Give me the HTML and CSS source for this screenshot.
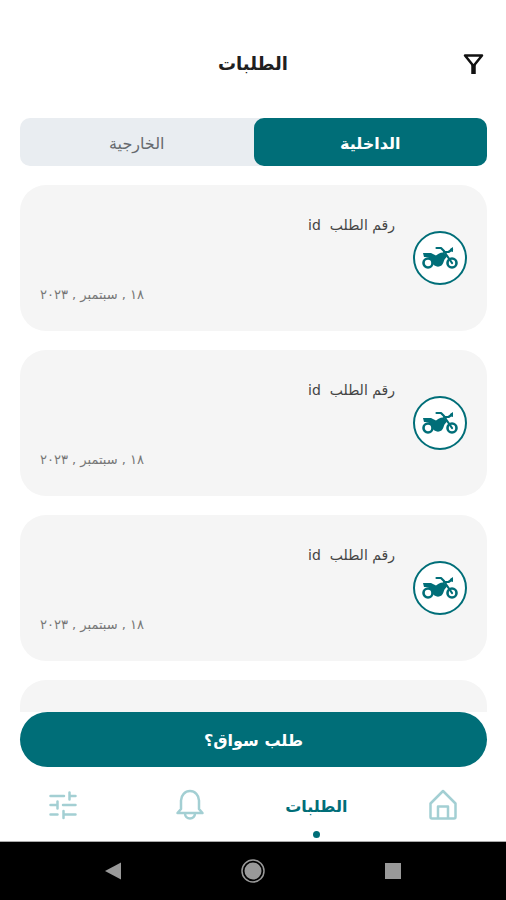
FILE: index.html
```
<!DOCTYPE html>
<html lang="ar" dir="rtl">
<head>
<meta charset="utf-8">
<meta name="viewport" content="width=device-width, initial-scale=1">
<title>الطلبات</title>
<link rel="stylesheet" href="styles.css">
</head>
<body>
<svg class="sprite" aria-hidden="true">
  <symbol id="motorcycle" viewBox="0 0 36 24">
    <g fill="none" stroke="currentColor">
      <circle cx="6" cy="17" r="4.500" stroke-width="2.600"/>
      <circle cx="30" cy="17" r="4.500" stroke-width="2.600"/>
      <path d="M14.500 2h4.500l3 3 2.500 4 5.500 8M22 6h4.500l3.500-2.500" stroke-width="2.200" stroke-linecap="round" stroke-linejoin="round"/>
    </g>
    <path fill="currentColor" d="M1 7h8l5 2.500c2-2 5-3.500 8-3l3 4-2.500 3c-1 2-1 4-3 6-2 1.500-5 1.500-7 0-1.500-1-2-2-2.500-4C9 12 6 10.500 2 11zM28 3l3-2v5l-3-1z"/>
  </symbol>
</svg>
<div class="app">
  <header class="header">
    <h1 class="title">الطلبات</h1>
    <button class="filter" type="button" aria-label="تصفية">
      <svg class="filter-icon" viewBox="0 0 22 22"><path d="M3 2.500h17L11.500 13z" fill="none" stroke="currentColor" stroke-width="2.500" stroke-linejoin="round"/><path d="M11.500 11v10" stroke="currentColor" stroke-width="4.500"/></svg>
    </button>
  </header>
  <div class="tabs" role="tablist">
    <button class="tab tab-active" type="button" role="tab" aria-selected="true">الداخلية</button>
    <button class="tab" type="button" role="tab" aria-selected="false">الخارجية</button>
  </div>
  <main class="orders">
    <article class="card">
      <span class="badge"><svg class="bike"><use href="#motorcycle"/></svg></span>
      <div class="details"><h2 class="order">رقم الطلب&nbsp; id</h2><time class="date">١٨ , سبتمبر , ٢٠٢٣</time></div>
    </article>
    <article class="card">
      <span class="badge"><svg class="bike"><use href="#motorcycle"/></svg></span>
      <div class="details"><h2 class="order">رقم الطلب&nbsp; id</h2><time class="date">١٨ , سبتمبر , ٢٠٢٣</time></div>
    </article>
    <article class="card">
      <span class="badge"><svg class="bike"><use href="#motorcycle"/></svg></span>
      <div class="details"><h2 class="order">رقم الطلب&nbsp; id</h2><time class="date">١٨ , سبتمبر , ٢٠٢٣</time></div>
    </article>
    <article class="card"></article>
  </main>
  <button class="request" type="button">طلب سواق؟</button>
  <nav class="nav">
    <a class="nav-item" href="#home" aria-label="الرئيسية">
      <svg class="nav-icon" viewBox="0 0 32 32"><path d="M3.500 14.500 16 2l12.500 12.500V28q0 1.500-1.500 1.500H5q-1.500 0-1.500-1.500zM11 29V17.500h10V29" fill="none" stroke="currentColor" stroke-width="2.500" stroke-linejoin="round"/></svg>
    </a>
    <a class="nav-item nav-current" href="#orders" aria-current="page">الطلبات</a>
    <a class="nav-item" href="#notifications" aria-label="الإشعارات">
      <svg class="nav-icon" viewBox="0 0 32 32"><path d="M7 20V11.500a9 9.500 0 0 1 18 0V20l3.500 4H3.500zM11 24.500a5 5 0 0 0 10 0" fill="none" stroke="currentColor" stroke-width="2.500" stroke-linejoin="round" stroke-linecap="round"/></svg>
    </a>
    <a class="nav-item" href="#settings" aria-label="الإعدادات">
      <svg class="nav-icon" viewBox="0 0 32 32"><path d="M3.500 7H17M22.500 3.500v7M22.500 7h6M3.500 16h7M10.500 12.500v7M16 16h12.500M3.500 25.500h7M16.500 22v7M16.500 25.500h12" fill="none" stroke="currentColor" stroke-width="2.500" stroke-linecap="round"/></svg>
    </a>
  </nav>
  <footer class="system">
    <button class="key" type="button" aria-label="رجوع"><svg class="key-icon" viewBox="0 0 24 24"><path d="M4 12 20 3.500v17z" fill="currentColor"/></svg></button>
    <button class="key" type="button" aria-label="الشاشة الرئيسية"><svg class="key-icon" viewBox="0 0 24 24"><circle cx="12" cy="12" r="8.500" fill="currentColor"/><circle cx="12" cy="12" r="11" fill="none" stroke="currentColor" stroke-width="1.500"/></svg></button>
    <button class="key" type="button" aria-label="التطبيقات"><svg class="key-icon" viewBox="0 0 24 24"><path d="M4 4h16v16H4z" fill="currentColor"/></svg></button>
  </footer>
</div>
</body>
</html>
```
FILE: styles.css
```
:root {
  --teal: #006e78;
  --teal-light: #a3cfd3;
}
* { box-sizing: border-box; }
body {
  margin: 0;
  background: #fff;
  font-family: "DejaVu Sans", sans-serif;
}
button {
  border: 0;
  padding: 0;
  background: none;
  font: inherit;
  color: inherit;
  cursor: pointer;
}
svg { display: block; }
.sprite { position: absolute; width: 0; height: 0; }
.app {
  display: flex;
  flex-direction: column;
  height: 100vh;
  overflow: hidden;
}
.header {
  display: grid;
  grid-template-columns: 24px 1fr 24px;
  align-items: center;
  flex: none;
  padding: 48px 22px 38px;
}
.title {
  grid-column: 2;
  grid-row: 1;
  margin: 0;
  text-align: center;
  font-size: 18px;
  line-height: 32px;
  font-weight: 700;
  color: #202020;
}
.filter { grid-column: 1; grid-row: 1; color: #111; }
.filter-icon { width: 22px; height: 22px; }
.tabs {
  display: flex;
  flex: none;
  margin: 0 19px 0 20px;
  border-radius: 10px;
  background: #e9edf1;
}
.tab {
  flex: 1;
  height: 48px;
  padding-top: 2px;
  border-radius: 10px;
  font-size: 16px;
  color: #666a6e;
}
.tab-active { background: var(--teal); color: #fff; font-weight: 700; }
.orders {
  display: flex;
  flex-direction: column;
  gap: 19px;
  flex: 1;
  min-height: 0;
  margin: 19px 19px 0 20px;
  overflow: hidden;
}
.card {
  display: flex;
  align-items: center;
  flex: none;
  gap: 18px;
  min-height: 146px;
  padding: 24px 20px;
  border-radius: 26px;
  background: #f5f5f5;
}
.badge {
  display: flex;
  align-items: center;
  justify-content: center;
  width: 54px;
  height: 54px;
  border: 2px solid var(--teal);
  border-radius: 50%;
  background: #fff;
  color: var(--teal);
}
.bike { width: 36px; height: 24px; }
.details {
  display: flex;
  flex-direction: column;
  justify-content: space-between;
  align-self: stretch;
  flex: 1;
}
.order {
  margin: 0;
  font-size: 14px;
  line-height: 32px;
  font-weight: 400;
  color: #444;
}
.date {
  align-self: flex-end;
  font-size: 13px;
  line-height: 24px;
  color: #777;
}
.request {
  flex: none;
  height: 55px;
  margin: 0 19px 0 20px;
  padding-top: 2px;
  border-radius: 28px;
  background: var(--teal);
  font-size: 16px;
  font-weight: 700;
  color: #fff;
}
.nav {
  display: flex;
  flex: none;
  height: 75px;
  border-bottom: 1px solid #aaa;
}
.nav-item {
  position: relative;
  display: flex;
  justify-content: center;
  flex: 1;
  padding-top: 22px;
  color: var(--teal-light);
  text-decoration: none;
}
.nav-icon { width: 32px; height: 32px; }
.nav-current {
  font-size: 16px;
  line-height: 36px;
  font-weight: 700;
  color: var(--teal);
}
.nav-current::after {
  content: "";
  position: absolute;
  bottom: 3px;
  left: 50%;
  width: 7px;
  height: 7px;
  margin-left: -3px;
  border-radius: 50%;
  background: var(--teal);
}
.system {
  display: flex;
  direction: ltr;
  flex: none;
  height: 58px;
  padding: 0 43px;
  background: #000;
  color: #999;
}
.key {
  display: flex;
  align-items: center;
  justify-content: center;
  flex: 1;
}
.key-icon { width: 24px; height: 24px; }
```
